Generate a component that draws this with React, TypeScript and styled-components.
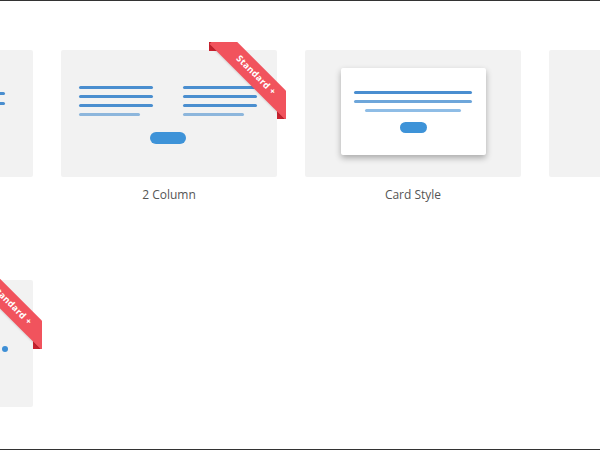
import React from "react";
import styled, { createGlobalStyle } from "styled-components";

const Global = createGlobalStyle`
  html, body { margin: 0; padding: 0; background: #ffffff; overflow: hidden; }
  * { box-sizing: border-box; }
`;

const Page = styled.div`
  width: 600px;
  height: 450px;
  border-top: 1px solid #333333;
  border-bottom: 1px solid #333333;
  overflow: hidden;
  font-family: "Open Sans", "Noto Sans", sans-serif;
`;

const Grid = styled.div`
  display: grid;
  grid-template-columns: repeat(4, 216px);
  column-gap: 28px;
  row-gap: 78px;
  width: max-content;
  margin-left: -183px;
  padding-top: 49px;
`;

const Item = styled.div`
  display: flex;
  flex-direction: column;
`;

const Thumb = styled.div`
  position: relative;
  width: 216px;
  height: 127px;
  background: #f2f2f2;
  border-radius: 2px;
`;

const Label = styled.div`
  margin-top: 10px;
  text-align: center;
  font-size: 12px;
  line-height: 15px;
  color: #555555;
`;

const Line = styled.div<{ $w: number; $c: string }>`
  width: ${(p) => p.$w}px;
  height: 3px;
  border-radius: 2px;
  background: ${(p) => p.$c};
`;

const Pill = styled.div<{ $w: number; $h: number; $mt: number }>`
  width: ${(p) => p.$w}px;
  height: ${(p) => p.$h}px;
  margin-top: ${(p) => p.$mt}px;
  border-radius: ${(p) => p.$h / 2}px;
  background: #3e93d8;
`;

const OneColumn = styled.div`
  display: flex;
  flex-direction: column;
  align-items: center;
  gap: 7px;
  padding-top: 42px;
`;

const TwoColumn = styled.div`
  display: flex;
  flex-direction: column;
  align-items: center;
  padding: 36px 20px 0 18px;
`;

const Columns = styled.div`
  display: flex;
  gap: 30px;
  align-self: stretch;
`;

const Stack = styled.div`
  display: flex;
  flex-direction: column;
  gap: 6px;
`;

const CardStyle = styled.div`
  display: flex;
  justify-content: center;
  padding-top: 18px;
`;

const InnerCard = styled.div`
  width: 145px;
  height: 87px;
  background: #ffffff;
  border-radius: 2px;
  box-shadow: 0 3px 6px rgba(0, 0, 0, 0.3);
  display: flex;
  flex-direction: column;
  align-items: center;
  gap: 6px;
  padding-top: 23px;
`;

const Dots = styled.div`
  display: flex;
  justify-content: flex-end;
  gap: 8px;
  padding: 66px 25px 0 0;
`;

const Dot = styled.div`
  width: 6px;
  height: 6px;
  border-radius: 50%;
  background: #3e8fd6;
`;

const Ribbon = styled.div`
  position: absolute;
  top: -8px;
  right: -9px;
  width: 77px;
  height: 77px;
  overflow: hidden;

  &::before,
  &::after {
    content: "";
    position: absolute;
    width: 9px;
    height: 9px;
    background: #c8222f;
  }
  &::before { top: 0; left: 0; }
  &::after { bottom: 0; right: 0; }
`;

const Band = styled.span`
  position: absolute;
  z-index: 1;
  left: -8px;
  top: 22.5px;
  width: 110px;
  height: 20.5px;
  line-height: 20.5px;
  transform: rotate(45deg);
  background: #f1535d;
  color: #ffffff;
  font-size: 9px;
  font-weight: 700;
  letter-spacing: 0.3px;
  text-align: center;
  box-shadow: 0 1px 2px rgba(0, 0, 0, 0.12);
`;

const DARK = "#4a8ecf";
const LIGHT = "#8db6dc";

const StandardRibbon = () => (
  <Ribbon>
    <Band>Standard +</Band>
  </Ribbon>
);

export default function App() {
  return (
    <>
      <Global />
      <Page>
        <Grid>
          <Item>
            <Thumb>
              <OneColumn>
                <Line $w={160} $c={DARK} />
                <Line $w={160} $c={DARK} />
                <Line $w={120} $c={LIGHT} />
                <Pill $w={36} $h={12} $mt={10} />
              </OneColumn>
            </Thumb>
            <Label>1 Column</Label>
          </Item>

          <Item>
            <Thumb>
              <TwoColumn>
                <Columns>
                  <Stack>
                    <Line $w={74} $c={DARK} />
                    <Line $w={74} $c={DARK} />
                    <Line $w={74} $c={DARK} />
                    <Line $w={61} $c={LIGHT} />
                  </Stack>
                  <Stack>
                    <Line $w={74} $c={DARK} />
                    <Line $w={74} $c={DARK} />
                    <Line $w={74} $c={DARK} />
                    <Line $w={61} $c={LIGHT} />
                  </Stack>
                </Columns>
                <Pill $w={36} $h={12} $mt={16} />
              </TwoColumn>
              <StandardRibbon />
            </Thumb>
            <Label>2 Column</Label>
          </Item>

          <Item>
            <Thumb>
              <CardStyle>
                <InnerCard>
                  <Line $w={118} $c="#4a8ed0" />
                  <Line $w={118} $c="#6ea6da" />
                  <Line $w={96} $c="#8fbde6" />
                  <Pill $w={27} $h={11} $mt={4} />
                </InnerCard>
              </CardStyle>
            </Thumb>
            <Label>Card Style</Label>
          </Item>

          <Item>
            <Thumb />
            <Label>Full Width</Label>
          </Item>

          <Item>
            <Thumb>
              <Dots>
                <Dot />
              </Dots>
              <StandardRibbon />
            </Thumb>
            <Label>Slider</Label>
          </Item>
        </Grid>
      </Page>
    </>
  );
}
